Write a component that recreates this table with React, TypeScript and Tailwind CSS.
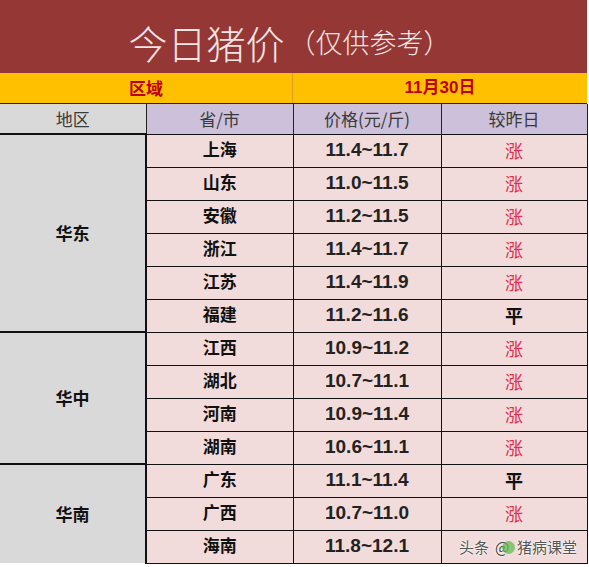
import React from 'react';

type Row = { prov: string; price: string; trend: '涨' | '平' };

const groups: { region: string; rows: Row[] }[] = [
  {
    region: '华东',
    rows: [
      { prov: '上海', price: '11.4~11.7', trend: '涨' },
      { prov: '山东', price: '11.0~11.5', trend: '涨' },
      { prov: '安徽', price: '11.2~11.5', trend: '涨' },
      { prov: '浙江', price: '11.4~11.7', trend: '涨' },
      { prov: '江苏', price: '11.4~11.9', trend: '涨' },
      { prov: '福建', price: '11.2~11.6', trend: '平' },
    ],
  },
  {
    region: '华中',
    rows: [
      { prov: '江西', price: '10.9~11.2', trend: '涨' },
      { prov: '湖北', price: '10.7~11.1', trend: '涨' },
      { prov: '河南', price: '10.9~11.4', trend: '涨' },
      { prov: '湖南', price: '10.6~11.1', trend: '涨' },
    ],
  },
  {
    region: '华南',
    rows: [
      { prov: '广东', price: '11.1~11.4', trend: '平' },
      { prov: '广西', price: '10.7~11.0', trend: '涨' },
      { prov: '海南', price: '11.8~12.1', trend: '涨' },
    ],
  },
];

const cjk = "font-['Noto_Sans_CJK_SC',sans-serif]";

export default function App() {
  return (
    <div className={`w-[589px] h-[567px] overflow-hidden bg-white ${cjk}`}>
      <div className="w-[587px]">
        {/* title band */}
        <div className="h-[73px] bg-[#953735] flex items-center justify-center text-[#f3e4e4] pt-3 pr-2">
          <span className="text-[39px] font-light">今日猪价</span>
          <span className="text-[27px] font-light ml-1">（仅供参考）</span>
        </div>

        {/* yellow band */}
        <div className="h-[31px] bg-[#ffc000] grid grid-cols-[293px_1fr] text-[#c00000] font-bold text-[17px] border-b border-[#222]">
          <div className="flex items-center justify-center border-r border-[#d9a020]">区域</div>
          <div className="flex items-center justify-center font-['Liberation_Sans','Noto_Sans_CJK_SC',sans-serif]">11月30日</div>
        </div>

        <table className="w-[587px] border-collapse table-fixed">
          <colgroup>
            <col className="w-[146px]" />
            <col className="w-[147px]" />
            <col className="w-[148px]" />
            <col className="w-[146px]" />
          </colgroup>
          <thead>
            <tr className="h-[30px] text-[17px] text-[#3a3a3a]">
              <th className="bg-[#d9d9d9] font-normal border-r border-[#222] p-0">地区</th>
              <th className="bg-[#ccc0da] font-normal border-r border-[#222] p-0">省/市</th>
              <th className="bg-[#ccc0da] font-normal border-r border-[#222] p-0">价格(元/斤)</th>
              <th className="bg-[#ccc0da] font-normal border-r border-[#222] p-0">较昨日</th>
            </tr>
          </thead>
          <tbody>
            {groups.map((g) =>
              g.rows.map((r, i) => (
                <tr key={r.prov} className="h-[33px]">
                  {i === 0 && (
                    <td
                      rowSpan={g.rows.length}
                      className="bg-[#d9d9d9] border-t-2 border-r-2 border-[#111] text-center text-[17px] font-bold text-[#111] p-0"
                    >
                      {g.region}
                    </td>
                  )}
                  <td className="bg-[#f2dcdb] border border-[#111] text-center text-[17px] font-bold text-[#111] p-0 leading-none pb-1">
                    {r.prov}
                  </td>
                  <td className="bg-[#f2dcdb] border border-[#111] text-center text-[19px] font-bold text-[#222] p-0 font-['Liberation_Sans',sans-serif]">
                    {r.price}
                  </td>
                  <td className="bg-[#f2dcdb] border border-[#111] text-center p-0">
                    {r.prov === '海南' ? (
                      // watermark covers the last trend cell
                      <span className="inline-flex items-center gap-[2px] pl-2 text-[15px] text-[#555] whitespace-nowrap [text-shadow:0_0_2px_#fff,0_0_2px_#fff]">
                        头条
                        <span className="ml-1 text-[#444]">@</span>
                        <span className="w-[13px] h-[13px] -ml-[9px] rounded-full bg-[#5cb848] opacity-70" />
                        猪病课堂
                      </span>
                    ) : r.trend === '涨' ? (
                      <span className="text-[18px] text-[#e0304e]">涨</span>
                    ) : (
                      <span className="text-[18px] font-bold text-[#111]">平</span>
                    )}
                  </td>
                </tr>
              ))
            )}
          </tbody>
        </table>
      </div>
    </div>
  );
}
